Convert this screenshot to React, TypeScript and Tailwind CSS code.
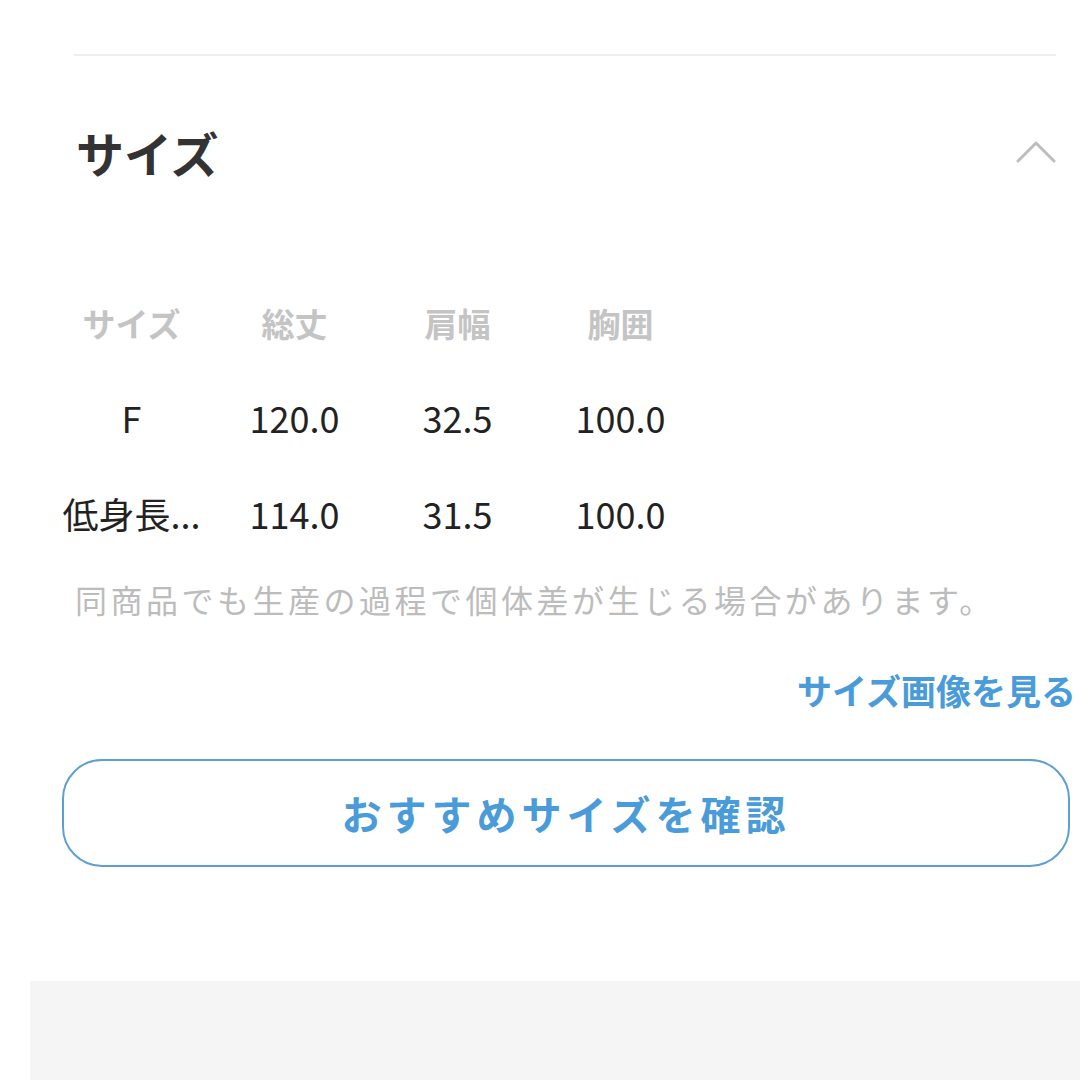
import React from 'react';

const ChevronUp: React.FC<{ className: string }> = ({ className }) => (
  <svg className={className} viewBox="0 0 40 24" fill="none" stroke="currentColor">
    <path d="M2 21L20 3l18 18" strokeWidth={3} strokeLinecap="round" strokeLinejoin="round" />
  </svg>
);

const headers = ['サイズ', '総丈', '肩幅', '胸囲'];
const rows = [
  ['F', '120.0', '32.5', '100.0'],
  ['低身長...', '114.0', '31.5', '100.0'],
];

const App: React.FC = () => {
  return (
    <div className="w-[1080px] h-[1080px] overflow-hidden bg-white font-['Noto_Sans_CJK_JP','Noto_Sans',sans-serif]">
      <div className="h-[54px]" />
      <div className="ml-[74px] mr-[24px] h-[2px] bg-[#eeeeee]" />

      <div className="flex items-center justify-between pl-[76px] pr-[24px] pt-[66px]">
        <h2 className="text-[48px] leading-[60px] font-bold text-[#333333]">サイズ</h2>
        <ChevronUp className="w-[40px] h-[24px] text-[#bdbdbd]" />
      </div>

      <div className="ml-[50px] mt-[112px] grid grid-cols-[163px_163px_163px_163px]">
        {headers.map((h) => (
          <div key={h} className="h-[60px] flex items-center justify-center text-[33px] font-bold text-[#c4c4c4]">
            {h}
          </div>
        ))}
      </div>
      <div className="mt-[33px] flex flex-col gap-[36px]">
        {rows.map((r, i) => (
          <div key={i} className="ml-[50px] grid grid-cols-[163px_163px_163px_163px]">
            {r.map((c, j) => (
              <div key={j} className="h-[60px] flex items-center justify-center text-[36px] text-[#222222] whitespace-nowrap">
                {c}
              </div>
            ))}
          </div>
        ))}
      </div>

      <p className="pl-[75px] mt-[32px] text-[32px] leading-[48px] tracking-[3.5px] text-[#bcbcbc] whitespace-nowrap">
        同商品でも生産の過程で個体差が生じる場合があります。
      </p>

      <div className="flex justify-end pr-[4px] mt-[43px]">
        <span className="text-[35px] leading-[48px] font-bold text-[#4a9bd9]">サイズ画像を見る</span>
      </div>

      <div className="ml-[62px] mr-[10px] mt-[45px] h-[108px] rounded-[40px] border-2 border-[#5b9fd3] flex items-center justify-center">
        <span className="text-[40px] font-bold tracking-[5px] text-[#4a9bd9]">おすすめサイズを確認</span>
      </div>

      <div className="ml-[30px] mt-[114px] h-[200px] bg-[#f5f5f5]" />
    </div>
  );
};

export default App;
